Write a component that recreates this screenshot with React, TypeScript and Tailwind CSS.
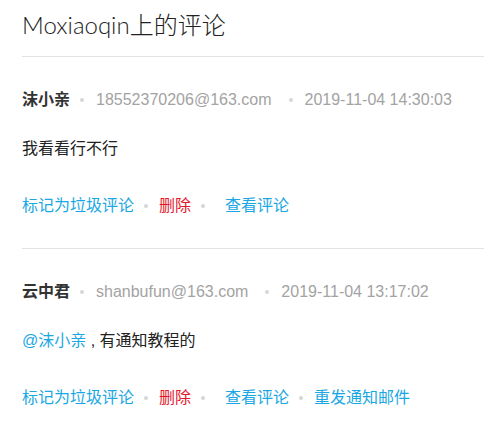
import React from 'react';

interface Action {
    label: string;
    danger?: boolean;
    wide?: boolean;
}

interface Comment {
    id: number;
    name: string;
    email: string;
    time: string;
    mention?: string;
    text: string;
    actions: Action[];
}

const comments: Comment[] = [
    {
        id: 1,
        name: '沫小亲',
        email: '18552370206@163.com',
        time: '2019-11-04 14:30:03',
        text: '我看看行不行',
        actions: [
            { label: '标记为垃圾评论' },
            { label: '删除', danger: true, wide: true },
            { label: '查看评论' },
        ],
    },
    {
        id: 2,
        name: '云中君',
        email: 'shanbufun@163.com',
        time: '2019-11-04 13:17:02',
        mention: '@沫小亲',
        text: ' , 有通知教程的',
        actions: [
            { label: '标记为垃圾评论' },
            { label: '删除', danger: true, wide: true },
            { label: '查看评论' },
            { label: '重发通知邮件' },
        ],
    },
];

const Dot: React.FC<{ className?: string }> = ({ className = '' }) => (
    <span className={`inline-block h-1 w-1 shrink-0 rounded-full bg-[#d6d6d6] ${className}`} />
);

const App: React.FC = () => {
    return (
        <div className="min-h-[432px] bg-white pl-[22px] font-['Liberation_Sans','Noto_Sans_CJK_SC',sans-serif]">
            <div className="border-b border-[#e2e2e2] pt-[9px] pb-[15px]">
                <h1 className="font-['Lato','Noto_Sans_CJK_SC',sans-serif] text-[24px] font-light leading-[32px] text-[#222]">
                    Moxiaoqin上的评论
                </h1>
            </div>
            {comments.map((c) => (
                <div key={c.id} className="border-b border-[#e2e2e2] pt-[31px] pb-[30px] text-[16px] leading-6">
                    <div className="flex items-center">
                        <span className="font-bold text-[#333]">{c.name}</span>
                        <Dot className="ml-[10px] mr-[12px]" />
                        <span className="text-[#a3a3a3]">{c.email}</span>
                        <Dot className="ml-[17px] mr-[12px]" />
                        <span className="text-[#a3a3a3]">{c.time}</span>
                    </div>
                    <p className="mt-[25px] whitespace-pre text-[#222]">
                        {c.mention && <span className="text-[#1aa7e3]">{c.mention}</span>}
                        {c.text}
                    </p>
                    <div className="mt-[33px] flex items-center">
                        {c.actions.map((a, i) => (
                            <React.Fragment key={a.label}>
                                {i > 0 && (
                                    <Dot
                                        className={`ml-[10px] ${
                                            c.actions[i - 1].wide ? 'mr-[20px]' : 'mr-[11px]'
                                        }`}
                                    />
                                )}
                                <span className={a.danger ? 'text-[#e5172a]' : 'text-[#1aa7e3]'}>
                                    {a.label}
                                </span>
                            </React.Fragment>
                        ))}
                    </div>
                </div>
            ))}
        </div>
    );
};

export default App;
